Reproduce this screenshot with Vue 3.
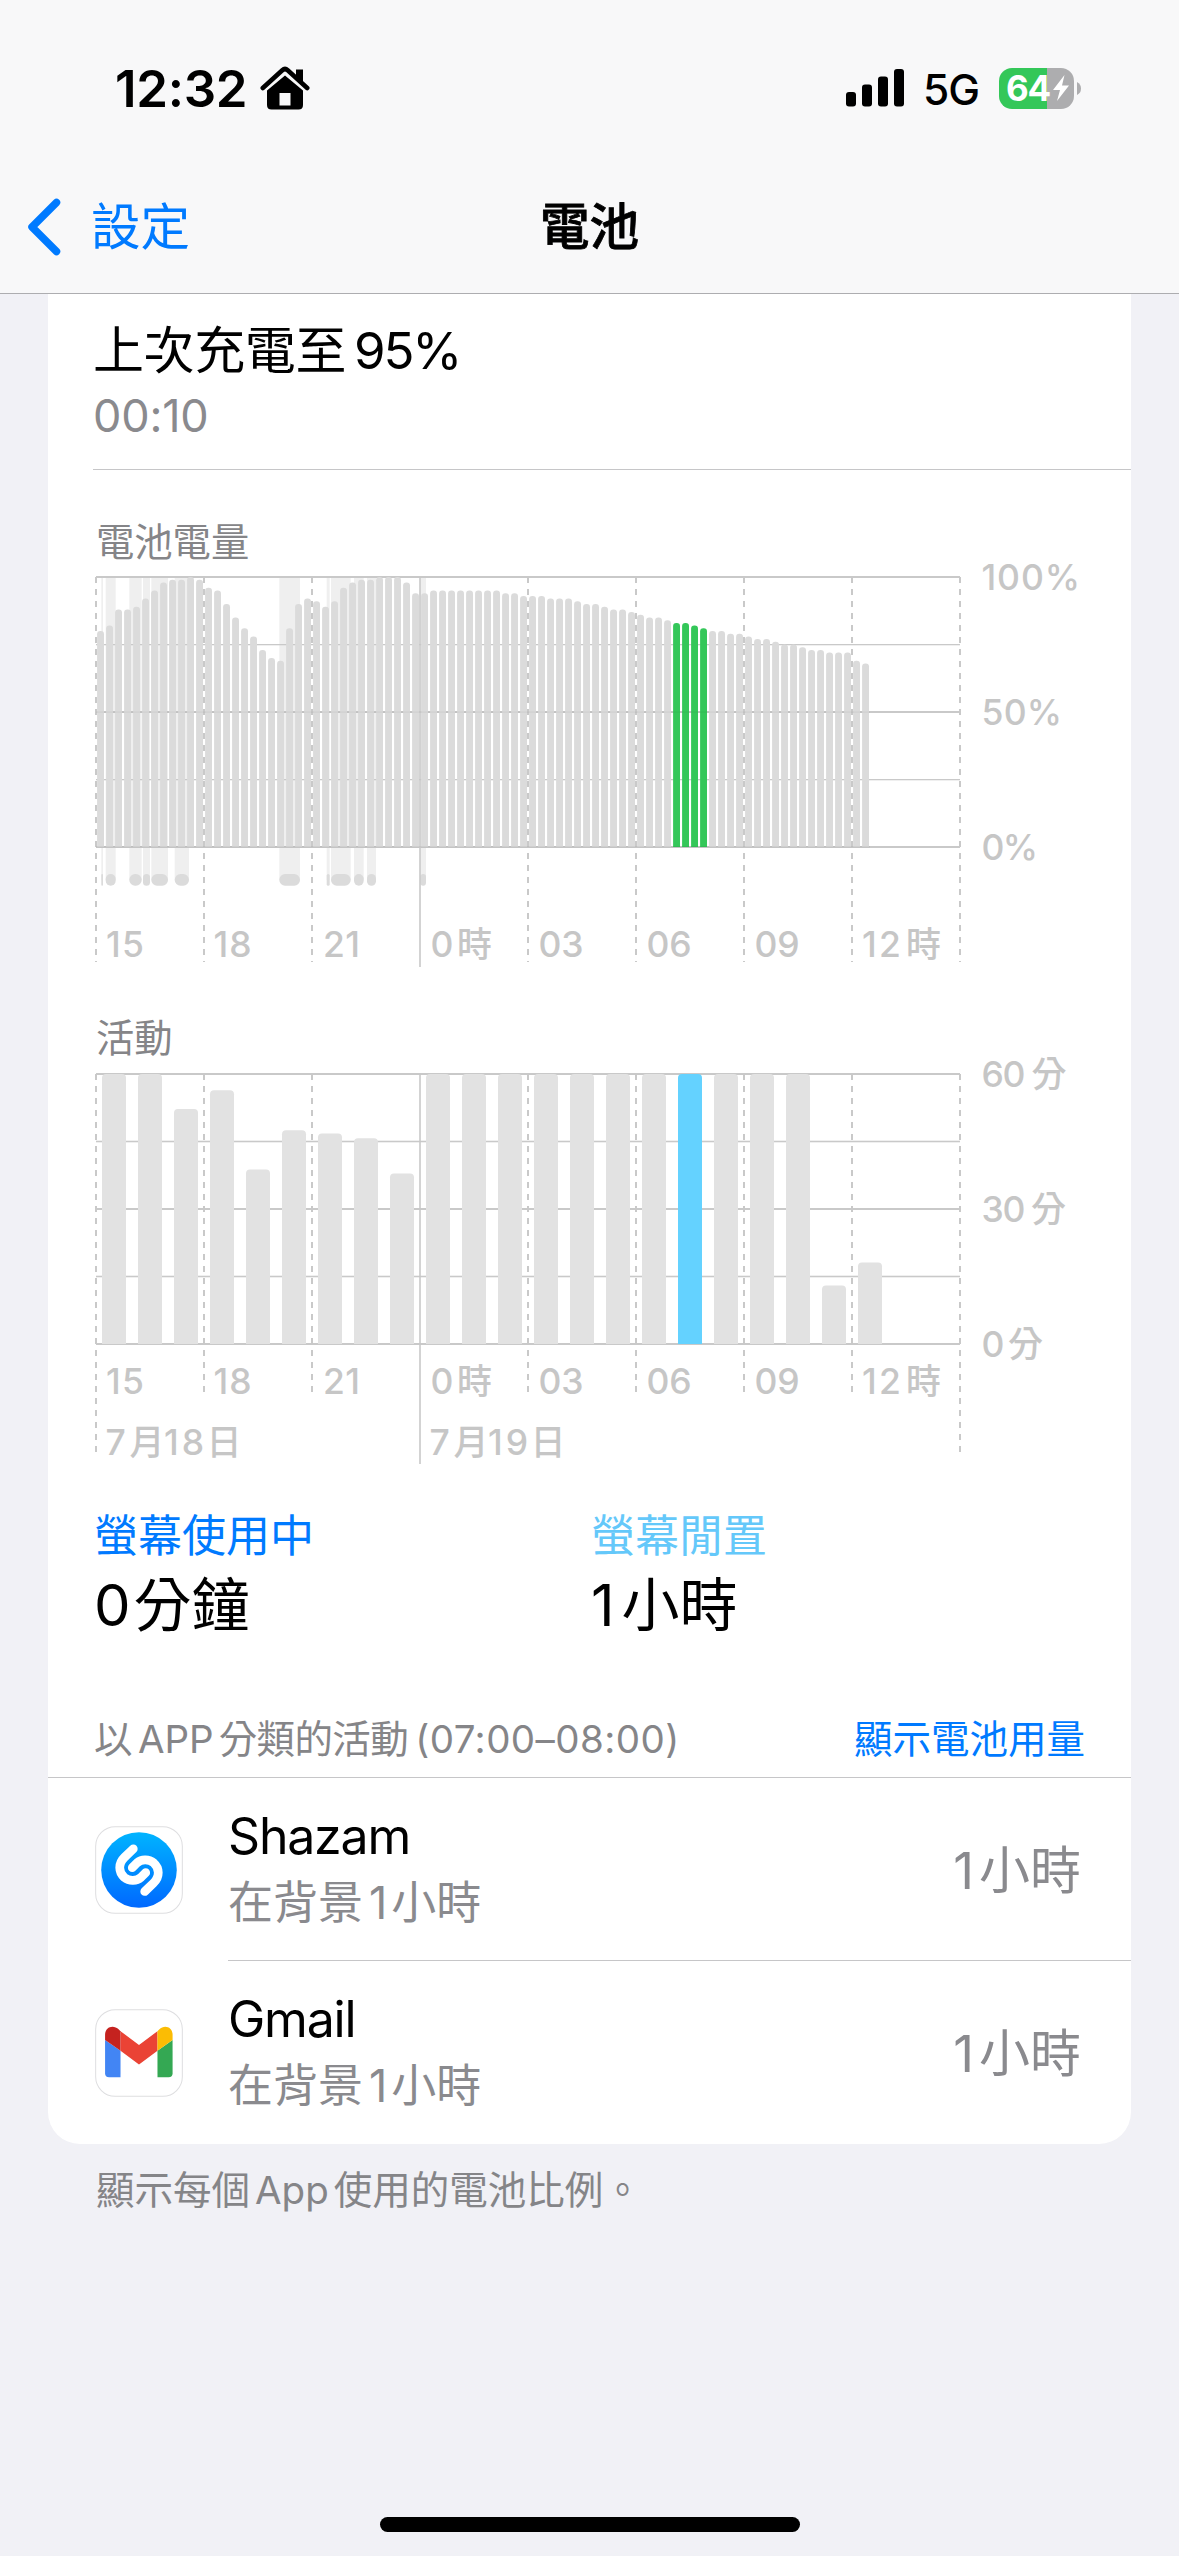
<script setup>
const LEFT = 96
const HOUR = 36

// Battery level, one sample every 15 minutes
const levels = [
  80, 82, 88, 88, 89, 92, 95, 98, 99, 99, 100, 99, 96, 95, 90, 85, 81, 78, 73, 70, 69, 81, 90, 92,
  91, 89, 91, 96, 98, 99, 99, 100, 100, 100, 98, 94, 94, 95, 95, 95, 95, 95, 95, 95, 95, 94, 94, 93,
  93, 93, 92, 92, 92, 91, 90, 90, 89, 88, 88, 87, 86, 85, 85, 84, 83, 83, 82, 81, 80, 80, 79, 79,
  78, 77, 77, 76, 75, 75, 74, 73, 73, 72, 72, 72, 69, 68,
]
// Charging periods as [start, end] on the horizontal axis
const charging = [
  [101.3, 103], [105.7, 115.7], [129.3, 141.7], [143, 150], [151.3, 168], [174.7, 189],
  [279.3, 300], [326.7, 329.7], [331, 350.7], [354, 363.7], [367, 376], [420.3, 426],
]
const minutes = [
  60, 60, 52.2, 56.4, 38.8, 47.5, 46.8, 45.7, 37.9, 60, 60, 60, 60, 60, 60, 60, 60, 60, 60, 60, 13, 18.1,
]
const ticks = [
  { x: 106, t: '15', w: 38 }, { x: 213.5, t: '18', w: 38 }, { x: 323, t: '21', w: 37 },
  { x: 430.5, t: '0', w: 22, cjk: 457 }, { x: 538.5, t: '03', w: 45 }, { x: 646.5, t: '06', w: 45 },
  { x: 754.5, t: '09', w: 45 }, { x: 862, t: '12', w: 39, cjk: 906 },
]
const dates = [{ x: 106, d: '18' }, { x: 430, d: '19' }]

const bar = (x, w, top, bottom, r) =>
  `M${x} ${bottom}V${top + r}Q${x} ${top} ${x + r} ${top}H${x + w - r}Q${x + w} ${top} ${x + w} ${top + r}V${bottom}Z`
const levelBar = (v, i) => bar(LEFT + 9 * i + 1.1, 6.9, 847 - v * 2.7, 847, 3.2)
const minuteBar = (v, i) => bar(LEFT + HOUR * i + 6, 24, 1344 - v * 4.5, 1344, 4)

const apps = [
  { name: 'Shazam', icon: 'shazam' },
  { name: 'Gmail', icon: 'gmail' },
]
</script>

<template>
  <div class="screen">
    <header class="top">
      <div class="status">
        <div class="status-left">
          <span class="time">12:32</span>
          <svg class="house" viewBox="0 0 50 44" width="50" height="44">
            <path d="M36 3.500h7v14l-7-6z" />
            <path d="M2.800 22L22.300 4.200q2.700-2.400 5.400 0L47.200 22" fill="none" stroke="#000" stroke-width="4.600" stroke-linecap="round" />
            <path fill-rule="evenodd" d="M7 24.500L25 9.500l18 15V39q0 4.500-4.500 4.500h-27Q7 43.500 7 39zM19.500 27v12.500h11V27z" />
          </svg>
        </div>
        <div class="status-right">
          <svg viewBox="0 0 58 38" width="58" height="38">
            <rect x="0" y="23" width="10" height="14.500" rx="3" />
            <rect x="16" y="15.500" width="10" height="22" rx="3" />
            <rect x="32" y="7.500" width="10" height="30" rx="3" />
            <rect x="48" y="0" width="10" height="37.500" rx="3" />
          </svg>
          <span class="net">5G</span>
          <div class="battery">
            <span class="pct">64</span>
            <svg class="bolt" viewBox="0 0 18 26" width="18" height="26"><path d="M12.500 0L1 15h7l-3 11L17 10.500H10z" fill="#fff" /></svg>
          </div>
          <svg class="nub" viewBox="0 0 4 13" width="4" height="13"><path d="M0 0q4 2 4 6.500T0 13z" fill="#adadaf" /></svg>
        </div>
      </div>
      <nav class="nav">
        <div class="back">
          <svg viewBox="0 0 34 58" width="34" height="58"><path d="M29.500 4.500L5 29l24.500 24.500" fill="none" stroke="#007aff" stroke-width="7.500" stroke-linecap="round" stroke-linejoin="round" /></svg>
          <span>設定</span>
        </div>
        <h1>電池</h1>
        <div class="side"></div>
      </nav>
    </header>

    <main class="card">
      <section class="last">
        <div class="last-title">上次充電至<span class="lat">95%</span></div>
        <div class="last-time">00:10</div>
      </section>

      <section class="charts">
        <h2>電池電量</h2>
        <svg class="chart" viewBox="48 562 1083 456" width="1083" height="456">
          <g fill="#efefef">
            <rect v-for="(c, i) in charging" :key="i" :x="c[0]" y="577" :width="c[1] - c[0]" height="303" />
          </g>
          <g fill="#dbdbdb">
            <rect v-for="(c, i) in charging" :key="i" :x="c[0]" y="874" :width="c[1] - c[0]" height="11.700" :rx="Math.min(5.8, (c[1] - c[0]) / 2)" />
          </g>
          <g fill="#c9c9c9">
            <rect x="96" y="576" width="864" height="2" />
            <rect x="96" y="644" width="864" height="1.300" />
            <rect x="96" y="711" width="864" height="2" />
            <rect x="96" y="779" width="864" height="1.300" />
            <rect x="96" y="846" width="864" height="2" />
          </g>
          <g stroke="#c9c9c9" stroke-width="2">
            <template v-for="n in 9" :key="n">
              <path v-if="n !== 4" :d="`M${n * 108 - 12} 577V962`" stroke-dasharray="6 6" />
            </template>
          </g>
          <path v-for="(v, i) in levels" :key="i" :d="levelBar(v, i)" :fill="i > 63 && i < 68 ? '#34c759' : '#dbdbdb'" />
          <g fill="#000" fill-opacity=".05">
            <rect x="96" y="711.500" width="774" height="1.200" />
            <rect x="96" y="846" width="774" height="1.500" />
          </g>
          <path d="M420 577V967" stroke="#c8c8c8" stroke-width="1.600" />
          <g class="axis">
            <template v-for="k in ticks" :key="k.x">
              <text :x="k.x" y="957.300" :textLength="k.w">{{ k.t }}</text>
              <text v-if="k.cjk" class="cjk" :x="k.cjk" y="957.300">時</text>
            </template>
            <text x="981.500" y="590" textLength="98.500">100%</text>
            <text x="981.500" y="725" textLength="80.500">50%</text>
            <text x="981.500" y="860" textLength="56.500">0%</text>
          </g>
        </svg>

        <h2>活動</h2>
        <svg class="chart" viewBox="48 1058 1083 432" width="1083" height="432">
          <g fill="#c9c9c9">
            <rect x="96" y="1073" width="864" height="2" />
            <rect x="96" y="1140.700" width="864" height="1.600" />
            <rect x="96" y="1208" width="864" height="2" />
            <rect x="96" y="1275.700" width="864" height="1.600" />
            <rect x="96" y="1343" width="864" height="2" />
          </g>
          <g stroke="#c9c9c9" stroke-width="2">
            <template v-for="n in 9" :key="n">
              <path v-if="n !== 4" :d="`M${n * 108 - 12} 1074V${n === 1 || n === 9 ? 1458 : 1398}`" stroke-dasharray="6 6" />
            </template>
            <path d="M420 1074V1464" stroke="#c8c8c8" stroke-width="1.600" />
          </g>
          <path v-for="(v, i) in minutes" :key="i" :d="minuteBar(v, i)" :fill="i === 16 ? '#64d2ff' : '#e2e2e2'" />
          <g class="axis">
            <template v-for="k in ticks" :key="k.x">
              <text :x="k.x" y="1394" :textLength="k.w">{{ k.t }}</text>
              <text v-if="k.cjk" class="cjk" :x="k.cjk" y="1394">時</text>
            </template>
            <template v-for="d in dates" :key="d.x">
              <text :x="d.x - 0.5" y="1455">7</text>
              <text class="cjk" :x="d.x + 23.500" y="1455">月</text>
              <text :x="d.x + 58" y="1455" textLength="40">{{ d.d }}</text>
              <text class="cjk" :x="d.x + 100.500" y="1455">日</text>
            </template>
            <text x="981.500" y="1087" textLength="44">60</text>
            <text class="cjk" x="1031.500" y="1087">分</text>
            <text x="981.500" y="1222" textLength="44">30</text>
            <text class="cjk" x="1031" y="1222">分</text>
            <text x="981.500" y="1357">0</text>
            <text class="cjk" x="1008" y="1357">分</text>
          </g>
        </svg>
      </section>

      <section class="stats">
        <div class="stat">
          <div class="stat-label on">螢幕使用中</div>
          <div class="stat-value"><span class="zero">0</span>分鐘</div>
        </div>
        <div class="stat">
          <div class="stat-label idle">螢幕閒置</div>
          <div class="stat-value"><span class="one">1</span>小時</div>
        </div>
      </section>

      <section class="apps">
        <div class="apps-head">
          <div class="apps-title">以<span class="app-word">APP</span>分類的活動<span class="range">(07:00–08:00)</span></div>
          <a class="link">顯示電池用量</a>
        </div>
        <div v-for="a in apps" :key="a.name" class="row">
          <svg class="icon" viewBox="0 0 262 262" width="88" height="88">
            <defs>
              <linearGradient id="disc" x1="0" y1="0" x2="0" y2="1">
                <stop offset="0" stop-color="#00b4ff" />
                <stop offset="1" stop-color="#0068ff" />
              </linearGradient>
            </defs>
            <rect x="2" y="2" width="258" height="258" rx="58" fill="#fff" stroke="#dedee0" stroke-width="3" />
            <template v-if="a.icon === 'shazam'">
              <circle cx="131" cy="131" r="112.500" fill="url(#disc)" />
              <g fill="none" stroke="#fff" stroke-width="26" stroke-linecap="round">
                <path d="M114 68L88 93C68 112 70 138 87 153C103 166 124 164 137 153L151 139" />
                <path d="M148 195L174 170C194 151 192 125 175 110C159 97 138 99 125 110L111 124" />
              </g>
            </template>
            <template v-else>
              <path d="M30 92L76 124V203H42a12 12 0 0 1-12-12z" fill="#4285f4" />
              <path d="M231 92L186 124V203h33a12 12 0 0 0 12-12z" fill="#34a853" />
              <path d="M76 66L131 107L186 66V124L131 165L76 124z" fill="#ea4335" />
              <path d="M30 92V76C30 54 54 45 71 61L76 66V124z" fill="#c5221f" />
              <path d="M231 92V76C231 54 207 45 191 61L186 66V124z" fill="#fbbc04" />
            </template>
          </svg>
          <div class="row-body">
            <div>
              <div class="name">{{ a.name }}</div>
              <div class="sub">在背景<span class="sub-one">1</span>小時</div>
            </div>
            <div class="amount"><span class="amt-one">1</span>小時</div>
          </div>
        </div>
      </section>
    </main>

    <p class="foot">顯示每個<span class="foot-app">App</span>使用的電池比例。</p>
    <div class="home"></div>
  </div>
</template>

<style>
body {
  margin: 0;
  background: #f1f1f6;
}
</style>

<style scoped>
.screen {
  width: 1179px;
  height: 2556px;
  display: flex;
  flex-direction: column;
  overflow: hidden;
  background: #f1f1f6;
  font-family: Inter, "Noto Sans CJK TC", sans-serif;
  color: #000;
  white-space: nowrap;
}
h1, h2, p {
  margin: 0;
  font-weight: 400;
}
svg {
  display: block;
  flex: none;
}
.chart {
  overflow: visible;
}
.top {
  height: 293px;
  flex: none;
  background: #f8f8f9;
  border-bottom: 1px solid #adadb0;
}
.status {
  display: flex;
  justify-content: space-between;
  height: 60px;
  padding: 58px 98px 0 115px;
}
.status-left, .status-right {
  display: flex;
  align-items: center;
}
.time {
  width: 145px;
  font-size: 51px;
  font-weight: 600;
  letter-spacing: -0.300px;
}
.net {
  margin: 3px 0 0 19px;
  width: 76px;
  font-size: 42.500px;
  font-weight: 500;
  letter-spacing: -1px;
}
.battery {
  display: flex;
  align-items: center;
  width: 68px;
  height: 41px;
  padding-left: 7px;
  border-radius: 13px;
  background: linear-gradient(90deg, #34c759 48px, #adadaf 48px);
}
.pct {
  width: 46px;
  font-size: 35px;
  font-weight: 700;
  letter-spacing: -1.200px;
  color: #fff;
}
.nub {
  margin-left: 3px;
}
.nav {
  display: flex;
  align-items: center;
  height: 60px;
  padding: 79px 27px 0;
  line-height: 60px;
}
.back, .side {
  flex: 1;
}
.back {
  display: flex;
  align-items: center;
  color: #007aff;
  font-size: 49.500px;
}
.back span {
  margin-left: 30px;
}
h1 {
  font-size: 49.500px;
  font-weight: 500;
  -webkit-text-stroke: 0.800px #000;
}
.card {
  width: 1083px;
  margin-left: 48px;
  flex: none;
  background: #fff;
  border-radius: 0 0 32px 32px;
}
.last {
  height: 149px;
  margin-left: 45px;
  padding: 26px 0 0 0;
  border-bottom: 1px solid #c6c6c8;
}
.last-title {
  font-size: 51px;
  line-height: 61px;
  letter-spacing: -0.400px;
}
.lat {
  margin-left: 8px;
  letter-spacing: -2.200px;
}
.last-time {
  margin-top: 5px;
  font-size: 45px;
  line-height: 60px;
  letter-spacing: -0.200px;
  color: #8a8a8e;
}
.charts {
  padding-top: 52px;
}
h2 {
  height: 40px;
  padding-left: 48px;
  font-size: 38.300px;
  line-height: 40px;
  color: #858588;
}
.axis {
  font-size: 35.500px;
  font-weight: 500;
  fill: #c6c6c6;
}
.cjk {
  font-size: 35px;
}
.stats {
  display: flex;
  height: 204px;
  padding-left: 46px;
}
.stat {
  width: 497px;
  padding-top: 16px;
}
.stat-label {
  font-size: 44px;
  line-height: 60px;
}
.on {
  color: #007aff;
}
.idle {
  color: #64c8fa;
}
.stat-value {
  font-size: 58px;
  line-height: 78px;
}
.zero {
  margin-right: 3px;
}
.one {
  margin-right: 7px;
}
.apps-head {
  display: flex;
  justify-content: space-between;
  height: 60px;
  padding: 23px 46px 0 46px;
  border-bottom: 1px solid #c6c6c8;
  font-size: 38.500px;
  line-height: 44px;
}
.apps-title {
  color: #858588;
  letter-spacing: -0.600px;
}
.app-word {
  margin: 0 5px 0 6px;
  letter-spacing: 0;
}
.range {
  margin-left: 7px;
  letter-spacing: 0.450px;
}
.link {
  color: #007aff;
}
.row {
  display: flex;
  align-items: center;
  height: 183px;
  padding-left: 47px;
}
.row-body {
  flex: 1;
  display: flex;
  align-items: center;
  justify-content: space-between;
  height: 182px;
  margin-left: 45px;
  padding: 0 50px 0 0;
  border-bottom: 1px solid #c6c6c8;
}
.row:last-child .row-body {
  border-color: transparent;
}
.name {
  font-size: 50px;
  line-height: 66px;
  letter-spacing: -1.200px;
}
.sub {
  font-size: 45px;
  line-height: 66px;
  padding-top: 1px;
  color: #8a8a8e;
}
.sub-one {
  margin: 0 4px 0 6px;
}
.amount {
  padding-bottom: 4px;
  font-size: 51px;
  color: #8a8a8e;
}
.amt-one {
  margin-right: 5px;
}
.foot {
  height: 60px;
  padding: 16px 0 0 96px;
  font-size: 38.500px;
  line-height: 60px;
  color: #858588;
}
.foot-app {
  margin: 0 5px;
}
.home {
  width: 420px;
  height: 15px;
  margin: auto auto 24px;
  border-radius: 8px;
  background: #000;
}
</style>
